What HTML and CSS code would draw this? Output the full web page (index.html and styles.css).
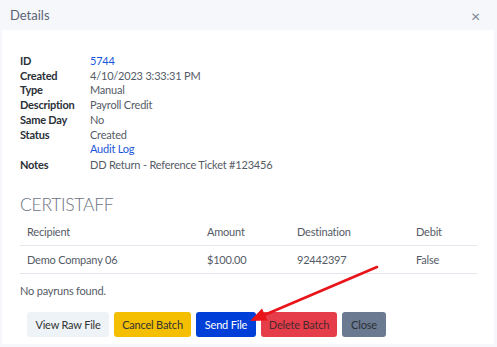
FILE: index.html
```html
<!DOCTYPE html>
<html>
<head>
<meta charset="utf-8">
<link rel="stylesheet" href="styles.css">
</head>
<body>
<div class="modal">
  <div class="modal-header">
    <span class="title">Details</span>
    <span class="close">&times;</span>
  </div>
  <div class="modal-body">
    <dl class="details">
      <dt>ID</dt><dd><a>5744</a></dd>
      <dt>Created</dt><dd>4/10/2023 3:33:31 PM</dd>
      <dt>Type</dt><dd>Manual</dd>
      <dt>Description</dt><dd>Payroll Credit</dd>
      <dt>Same Day</dt><dd>No</dd>
      <dt>Status</dt><dd>Created</dd>
      <dt></dt><dd><a>Audit Log</a></dd>
      <dt class="notes">Notes</dt><dd class="notes">DD Return - Reference Ticket #123456</dd>
    </dl>
    <h2 class="company">CERTISTAFF</h2>
    <table class="grid">
      <thead>
        <tr><th class="c1">Recipient</th><th class="c2">Amount</th><th class="c3">Destination</th><th class="c4">Debit</th></tr>
      </thead>
      <tbody>
        <tr><td>Demo Company 06</td><td>$100.00</td><td>92442397</td><td>False</td></tr>
      </tbody>
    </table>
    <p class="empty">No payruns found.</p>
    <div class="actions">
      <button class="btn light">View Raw File</button>
      <button class="btn warn">Cancel Batch</button>
      <button class="btn primary">Send File</button>
      <button class="btn danger">Delete Batch</button>
      <button class="btn gray">Close</button>
    </div>
  </div>
</div>
<svg class="arrow" width="497" height="347" viewBox="0 0 497 347">
  <line x1="377" y1="267" x2="262" y2="316" stroke="#e8141a" stroke-width="2.6" stroke-linecap="round"/>
  <polygon points="250,321 267.5,320.5 262,308.5" fill="#e8141a"/>
</svg>
</body>
</html>
```
FILE: styles.css
```css
html, body {
  margin: 0;
  padding: 0;
  background: #f5f7fa;
  width: 497px;
  height: 347px;
  overflow: hidden;
  font-family: Lato, "Noto Sans", sans-serif;
  letter-spacing: -0.2px;
}
.modal {
  width: 492px;
  margin-left: 2px;
}
.modal-header {
  height: 30px;
  display: flex;
  align-items: center;
  justify-content: space-between;
  padding: 0 14px 0 10px;
  margin-left: -2px;
  background: #f5f7fa;
}
.title {
  font-size: 13px;
  color: #5a6478;
  letter-spacing: 0;
}
.close {
  font-size: 16px;
  color: #7b8494;
}
.modal-body {
  background: #fff;
  height: 314px;
  padding: 24px 16px 0 18px;
  box-sizing: border-box;
}
.details {
  display: grid;
  grid-template-columns: 70px 1fr;
  margin: 0;
  font-size: 11px;
  line-height: 14.7px;
}
.details dt {
  font-weight: 700;
  color: #2a2f38;
}
.details dd {
  margin: 0;
  color: #555b66;
}
.details .notes {
  padding-top: 1.5px;
}
.details a {
  color: #1a56db;
}
.company {
  margin: 21px 0 0;
  font-size: 17.5px;
  font-weight: 300;
  color: #6b7383;
  line-height: 22px;
  letter-spacing: -0.3px;
}
.grid {
  width: 457px;
  border-collapse: collapse;
  margin-top: 2px;
  font-size: 11px;
  color: #555b66;
}
.grid th, .grid td {
  text-align: left;
  font-weight: 400;
  padding: 7px 7px 6px;
  line-height: 14px;
  border-bottom: 1px solid #e3e7ee;
}
.grid td {
  padding-top: 7px;
  padding-bottom: 6px;
}
.c1 { width: 166px; }
.c2 { width: 76px; }
.c3 { width: 105px; }
.empty {
  margin: 10px 0 0;
  font-size: 11px;
  color: #555b66;
  line-height: 14px;
}
.actions {
  display: flex;
  gap: 5px;
  margin: 14px 0 0 7px;
}
.btn {
  font-family: inherit;
  font-size: 11px;
  letter-spacing: -0.2px;
  height: 25px;
  border: none;
  border-radius: 3px;
  padding: 0;
  white-space: nowrap;
  color: #333;
}
.light { background: #eef3f8; width: 82px; }
.warn { background: #f3bf00; width: 77px; }
.primary { background: #0040d8; color: #fff; width: 60px; }
.danger { background: #e63d4b; color: #4a2a2e; width: 76px; }
.gray { background: #6c7a91; color: #2b2f36; width: 44px; }
.arrow {
  position: absolute;
  left: 0;
  top: 0;
  pointer-events: none;
}
```
